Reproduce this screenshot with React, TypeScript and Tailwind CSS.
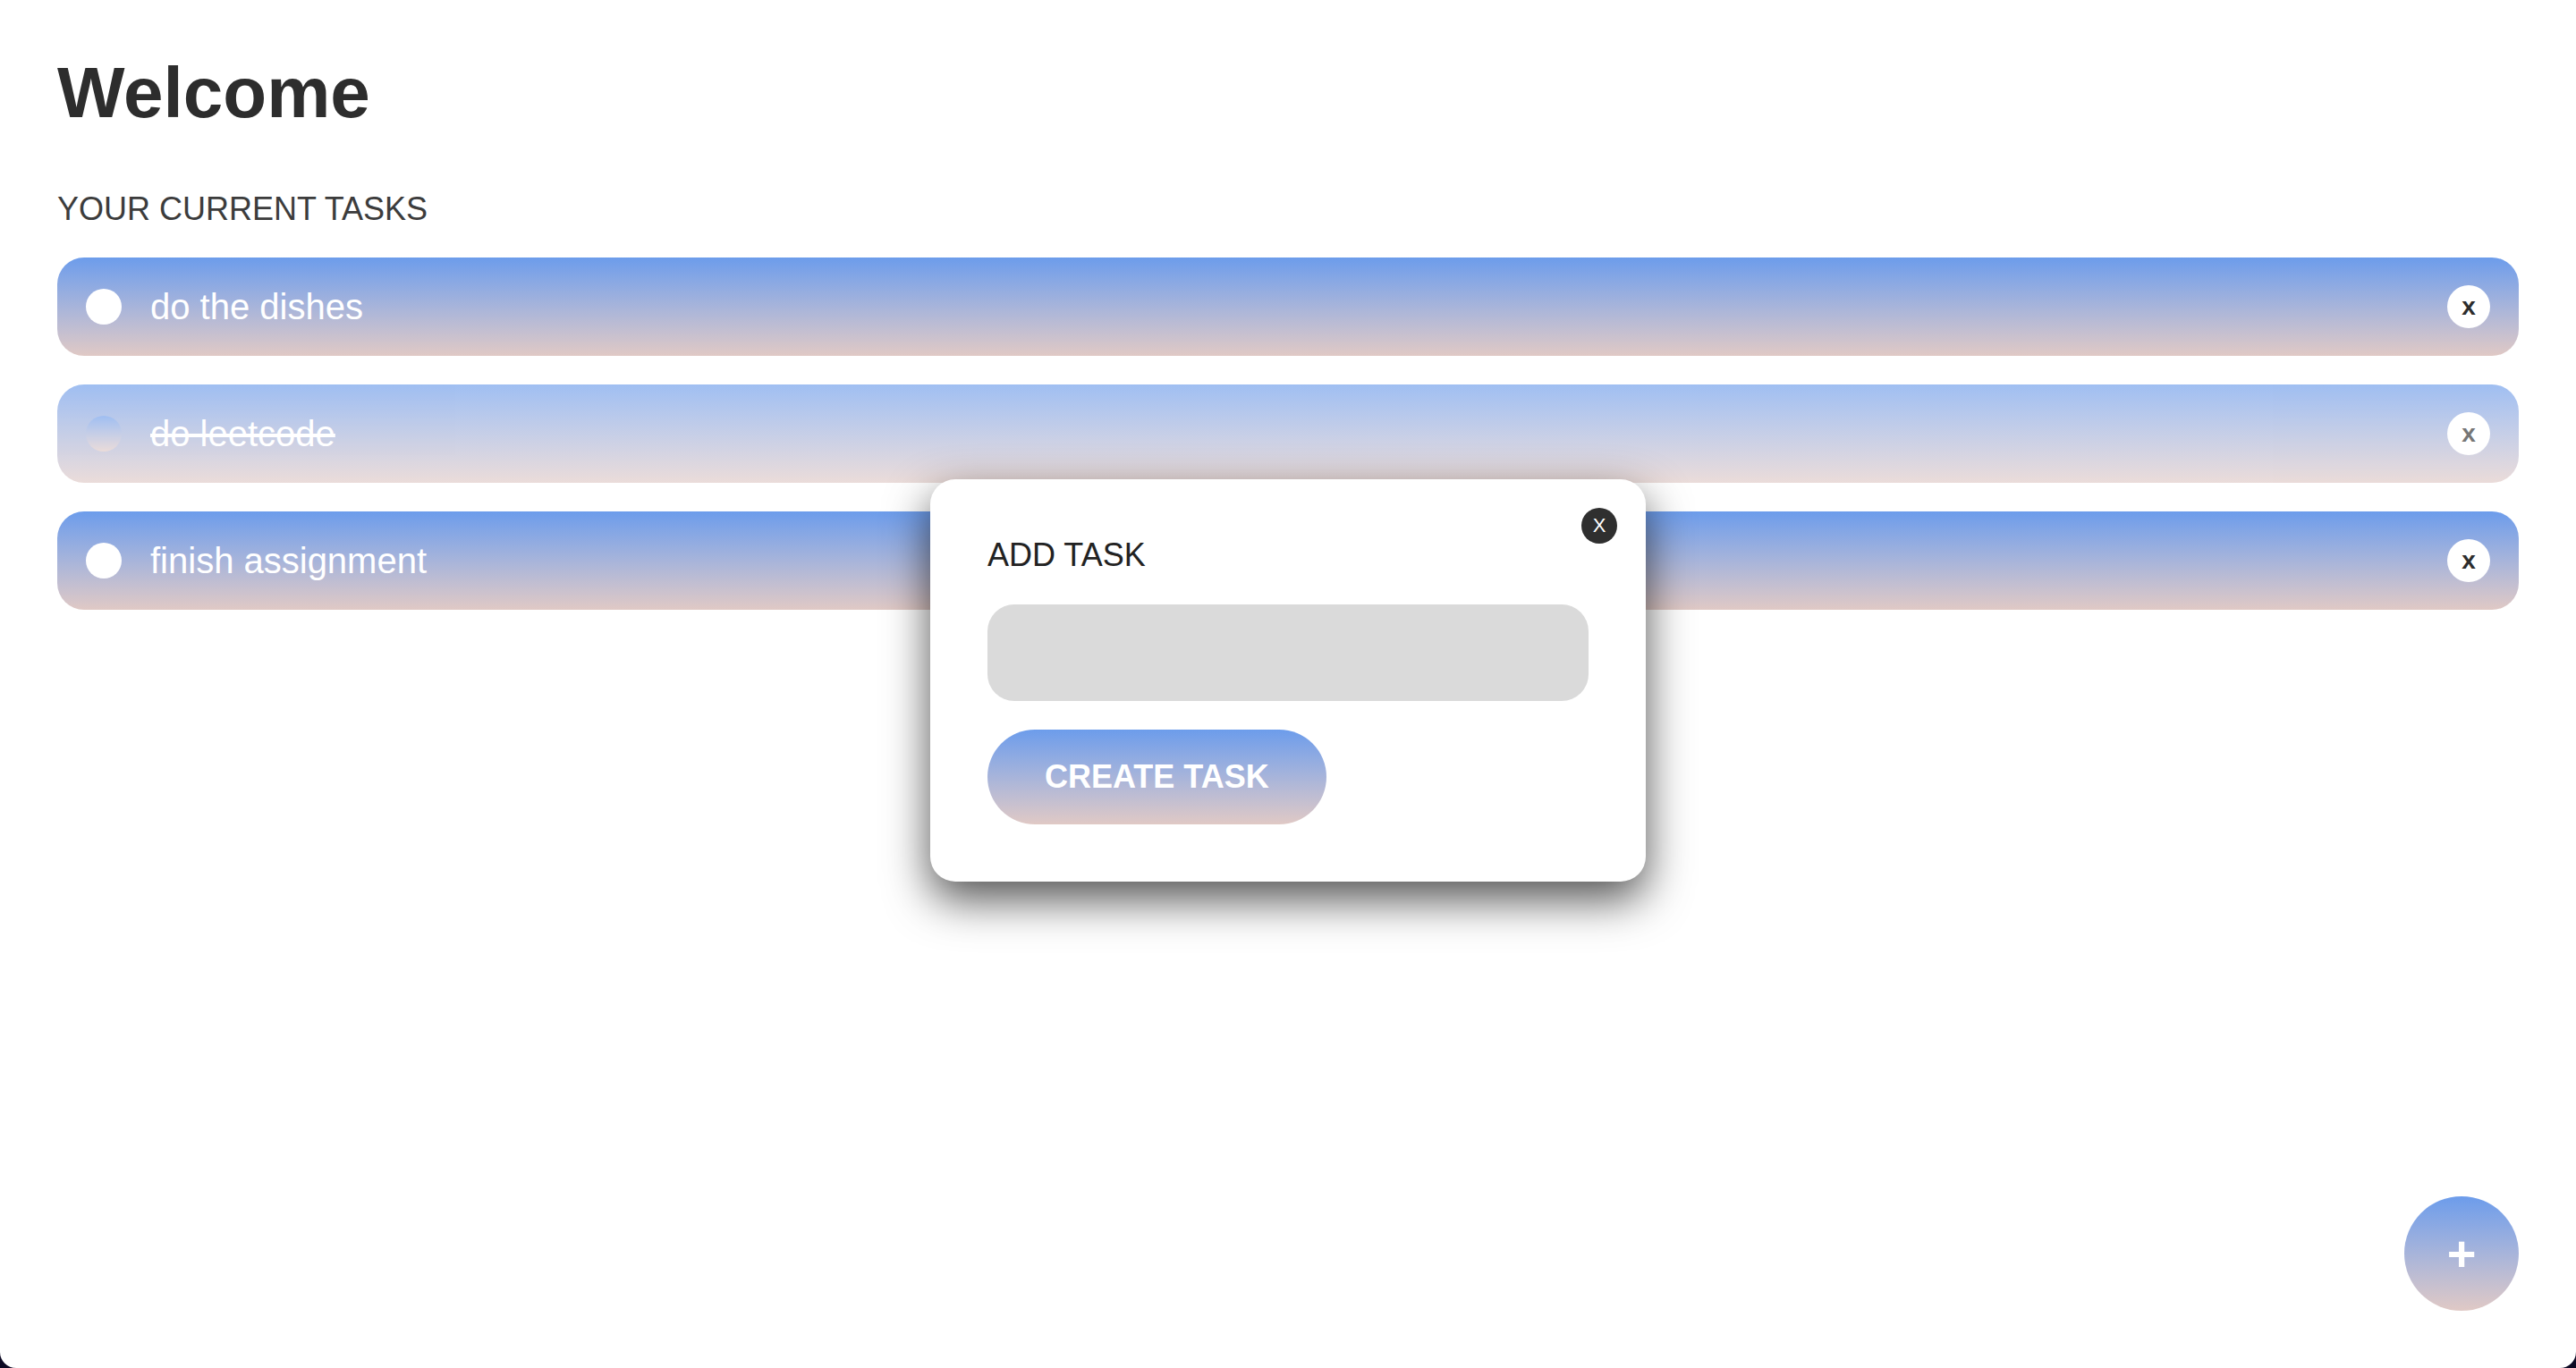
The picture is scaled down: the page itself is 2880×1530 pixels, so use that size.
import {useState} from "react";

type Task = {id: number; title: string; done: boolean};

const initialTasks: Task[] = [
  {id: 1, title: "do the dishes", done: false},
  {id: 2, title: "do leetcode", done: true},
  {id: 3, title: "finish assignment", done: false},
];

function TaskRow({task}: {task: Task}) {
  return (
    <div className={`flex h-[110px] items-center rounded-[30px] bg-gradient-to-b from-[#6c9ceb] to-[#e0c9c5] px-8 ${task.done ? "opacity-65" : ""}`}>
      <div className={`h-10 w-10 shrink-0 rounded-full ${task.done ? "bg-gradient-to-b from-[#6c9ceb] to-[#e0c9c5]" : "bg-white"}`} />
      <span className={`ml-8 flex-1 text-[40px] leading-none text-white ${task.done ? "line-through" : ""}`}>{task.title}</span>
      <button className="flex h-12 w-12 items-center justify-center rounded-full bg-white text-[28px] font-bold leading-none text-[#2d2d2d]">
        x
      </button>
    </div>
  );
}

export default function App() {
  const [tasks] = useState(initialTasks);

  return (
    <div className="min-h-screen bg-[#0d0a24]" style={{fontFamily: '"Liberation Sans", Arial, sans-serif'}}>
      <div className="relative h-[1530px] overflow-hidden rounded-b-[18px] bg-white px-16 pt-[58px]">
        <h1 className="text-[80px] font-bold leading-[92px] text-[#2d2d2d]">Welcome</h1>
        <h2 className="mt-[63px] text-[36px] leading-[41px] text-[#3c3c3c]">YOUR CURRENT TASKS</h2>

        {/* task list */}
        <div className="mt-[34px] flex flex-col gap-8">
          {tasks.map((t) => (
            <TaskRow key={t.id} task={t} />
          ))}
        </div>

        {/* add task modal */}
        <div className="absolute left-1/2 top-[calc(50%-4px)] w-[800px] -translate-x-1/2 -translate-y-1/2 rounded-[28px] bg-white p-16 shadow-[0_20px_50px_rgba(0,0,0,0.68)]">
          <button className="absolute right-8 top-8 flex h-10 w-10 items-center justify-center rounded-full bg-[#2f2f2f] text-[22px] leading-none text-white">
            X
          </button>
          <h3 className="text-[36px] leading-[41px] text-[#222]">ADD TASK</h3>
          <input className="mt-[35px] h-[108px] w-full rounded-[30px] bg-[#dadada] px-8 text-[36px] outline-none" />
          <button className="mt-8 h-[106px] rounded-full bg-gradient-to-b from-[#6c9ceb] to-[#e0c9c5] px-16 text-[36px] font-bold text-white">
            CREATE TASK
          </button>
        </div>

        {/* floating add button */}
        <button className="absolute bottom-16 right-16 flex h-[128px] w-[128px] items-center justify-center rounded-full bg-gradient-to-b from-[#6c9ceb] to-[#e0c9c5] text-[56px] font-bold leading-none text-white">
          +
        </button>
      </div>
    </div>
  );
}
